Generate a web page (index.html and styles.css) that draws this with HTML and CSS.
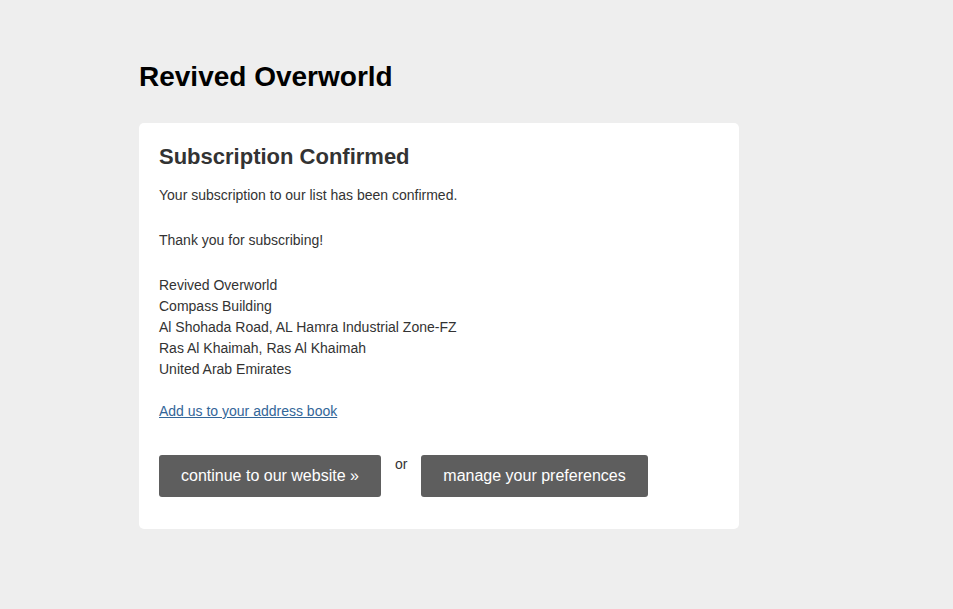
FILE: index.html
```html
<!DOCTYPE html>
<html>
<head>
<meta charset="utf-8">
<link rel="stylesheet" href="styles.css">
</head>
<body>
<div class="wrap">
  <h1 class="brand">Revived Overworld</h1>
  <div class="card">
    <h2 class="title">Subscription Confirmed</h2>
    <p class="para">Your subscription to our list has been confirmed.</p>
    <p class="para">Thank you for subscribing!</p>
    <p class="para address">Revived Overworld<br>Compass Building<br>Al Shohada Road, AL Hamra Industrial Zone-FZ<br>Ras Al Khaimah, Ras Al Khaimah<br>United Arab Emirates</p>
    <p class="para"><a class="link" href="#">Add us to your address book</a></p>
    <div class="actions">
      <a class="btn" href="#">continue to our website »</a>
      <span class="or">or</span>
      <a class="btn" href="#">manage your preferences</a>
    </div>
  </div>
</div>
</body>
</html>
```
FILE: styles.css
```css
html, body {
  margin: 0;
  padding: 0;
  background: #eeeeee;
  font-family: "Liberation Sans", Arial, sans-serif;
}
.wrap {
  padding: 61px 0 0 139px;
  width: 600px;
}
.brand {
  margin: 0 0 30px;
  font-size: 28px;
  line-height: 32px;
  font-weight: bold;
  color: #000;
}
.card {
  background: #fff;
  border-radius: 5px;
  padding: 21px 20px 32px;
}
.title {
  margin: 0 0 16px;
  font-size: 22px;
  line-height: 25px;
  font-weight: bold;
  color: #333;
}
.para {
  margin: 0 0 24px;
  font-size: 14px;
  line-height: 21px;
  color: #333;
}
.para.address {
  margin-bottom: 21px;
}
.link {
  color: #336699;
  text-decoration: underline;
}
.actions {
  display: flex;
  align-items: flex-start;
  gap: 14px;
  margin-top: 33px;
}
.btn {
  display: block;
  background: #5e5e5e;
  color: #fff;
  text-decoration: none;
  font-size: 16px;
  line-height: 42px;
  padding: 0 22px;
  border-radius: 3px;
}
.or {
  font-size: 14px;
  line-height: 18px;
  color: #333;
}
```
